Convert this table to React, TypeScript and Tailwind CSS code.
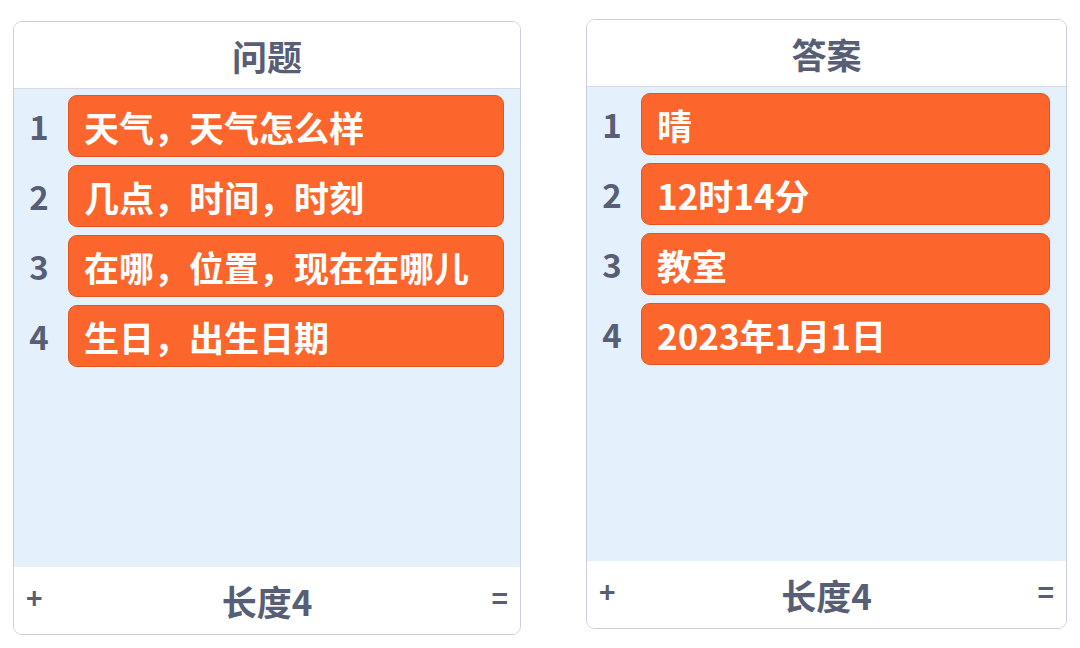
import React from 'react';

interface ListProps {
  title:  string;
  items:  string[];
  width:  string;
  height: string;
  offset: string;
}

const font = { fontFamily: '"Noto Sans CJK SC", "Noto Sans", sans-serif' };

function ListMonitor({ title, items, width, height, offset }: ListProps) {
  return (
    <div
      className={`flex flex-col overflow-hidden rounded-[9px] border border-[#c9d0dc] bg-white ${width} ${height} ${offset}`}
    >
      {/* header */}
      <div className="flex h-[67px] shrink-0 items-center justify-center border-b border-[#d5dbe5] bg-white">
        <span className="text-[35px] font-bold leading-none text-[#575e75]">{title}</span>
      </div>

      {/* rows */}
      <div className="flex flex-1 flex-col gap-[8px] bg-[#e5f0fd] pt-[6px] pr-[16px]">
        {items.map((text, i) => (
          <div key={i} className="flex items-center">
            <span className="w-[50px] text-center text-[33px] font-bold leading-none text-[#575e75]">
              {i + 1}
            </span>
            <div className="ml-[4px] flex h-[62px] flex-1 items-center rounded-[9px] border border-[#e0561f] bg-[#fc662c] px-[15px]">
              <span className="text-[35px] font-bold leading-none text-white">{text}</span>
            </div>
          </div>
        ))}
      </div>

      {/* footer */}
      <div className="flex h-[67px] shrink-0 items-center justify-between bg-white px-[12px]">
        <span className="-mt-[8px] text-[28px] font-bold leading-none text-[#575e75]">+</span>
        <span className="text-[35px] font-bold leading-none text-[#575e75]">长度4</span>
        <span className="-mt-[8px] text-[28px] font-bold leading-none text-[#575e75]">=</span>
      </div>
    </div>
  );
}

export default function App() {
  return (
    <div className="flex h-[648px] w-[1080px] items-start bg-white" style={font}>
      <ListMonitor
        title="问题"
        items={['天气，天气怎么样', '几点，时间，时刻', '在哪，位置，现在在哪儿', '生日，出生日期']}
        width="w-[508px]"
        height="h-[614px]"
        offset="ml-[13px] mt-[21px]"
      />
      <ListMonitor
        title="答案"
        items={['晴', '12时14分', '教室', '2023年1月1日']}
        width="w-[481px]"
        height="h-[610px]"
        offset="ml-[65px] mt-[19px]"
      />
    </div>
  );
}
